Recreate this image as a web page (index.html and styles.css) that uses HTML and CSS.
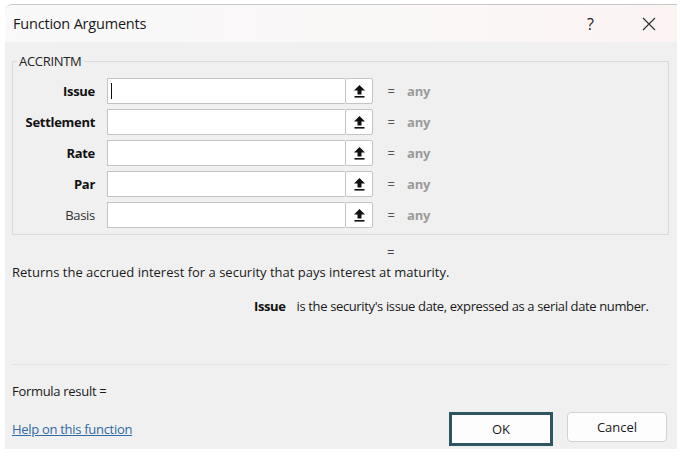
FILE: index.html
```html
<!DOCTYPE html>
<html>
<head>
<meta charset="utf-8">
<link rel="stylesheet" href="styles.css">
</head>
<body>
<div class="window">
  <div class="titlebar">
    <span class="title">Function Arguments</span>
    <span class="help">?</span>
    <svg class="close" width="14" height="14" viewBox="0 0 14 14"><path d="M1 1L13 13M13 1L1 13" stroke="#333" stroke-width="1.2" fill="none"/></svg>
  </div>
  <div class="content">
    <fieldset class="group">
      <legend>ACCRINTM</legend>
      <div class="args">
        <span class="lbl b">Issue</span>
        <div class="field"><span class="input"><span class="caret"></span></span><span class="pick"><svg width="11" height="13" viewBox="0 0 11 13"><path d="M5.5 0L11 5.5H7.5V9.5H3.5V5.5H0Z" fill="#111"/><rect x="0.5" y="11" width="10" height="1.6" fill="#111"/></svg></span></div>
        <span class="eq">=</span><span class="any">any</span>

        <span class="lbl b">Settlement</span>
        <div class="field"><span class="input"></span><span class="pick"><svg width="11" height="13" viewBox="0 0 11 13"><path d="M5.5 0L11 5.5H7.5V9.5H3.5V5.5H0Z" fill="#111"/><rect x="0.5" y="11" width="10" height="1.6" fill="#111"/></svg></span></div>
        <span class="eq">=</span><span class="any">any</span>

        <span class="lbl b">Rate</span>
        <div class="field"><span class="input"></span><span class="pick"><svg width="11" height="13" viewBox="0 0 11 13"><path d="M5.5 0L11 5.5H7.5V9.5H3.5V5.5H0Z" fill="#111"/><rect x="0.5" y="11" width="10" height="1.6" fill="#111"/></svg></span></div>
        <span class="eq">=</span><span class="any">any</span>

        <span class="lbl b">Par</span>
        <div class="field"><span class="input"></span><span class="pick"><svg width="11" height="13" viewBox="0 0 11 13"><path d="M5.5 0L11 5.5H7.5V9.5H3.5V5.5H0Z" fill="#111"/><rect x="0.5" y="11" width="10" height="1.6" fill="#111"/></svg></span></div>
        <span class="eq">=</span><span class="any">any</span>

        <span class="lbl">Basis</span>
        <div class="field"><span class="input"></span><span class="pick"><svg width="11" height="13" viewBox="0 0 11 13"><path d="M5.5 0L11 5.5H7.5V9.5H3.5V5.5H0Z" fill="#111"/><rect x="0.5" y="11" width="10" height="1.6" fill="#111"/></svg></span></div>
        <span class="eq">=</span><span class="any">any</span>
      </div>
    </fieldset>
    <div class="result-eq">=</div>
    <p class="desc">Returns the accrued interest for a security that pays interest at maturity.</p>
    <p class="argdesc"><b>Issue</b><span>is the security's issue date, expressed as a serial date number.</span></p>
    <div class="sep"></div>
    <p class="formula">Formula result =</p>
    <div class="footer">
      <a class="link" href="#">Help on this function</a>
      <div class="buttons">
        <span class="btn ok">OK</span>
        <span class="btn cancel">Cancel</span>
      </div>
    </div>
  </div>
</div>
</body>
</html>
```

FILE: styles.css
```css
* { box-sizing: border-box; }
html, body { margin: 0; padding: 0; background: #ffffff; }
body {
  font-family: "Open Sans", "Noto Sans", sans-serif;
  font-size: 13px;
  color: #1a1a1a;
}
.window {
  margin: 4px 3px 0 5px;
  height: 445px;
  border-top: 1px solid #c9c9c9;
  border-top-left-radius: 7px;
  overflow: hidden;
  background: #f0f0f0;
}
.titlebar {
  height: 37px;
  display: flex;
  align-items: center;
  background: linear-gradient(to right, #f9f9f9, #fbf7f7 70%, #fcf3f3);
  padding-left: 8px;
}
.title { font-size: 14.5px; color: #1a1a1a; flex: 1; letter-spacing: -0.2px; }
.help { font-size: 16px; color: #222; margin-right: 48px; }
.close { margin-right: 21px; }
.content { padding: 0 8px 0 7px; }
.group {
  margin: 10px 0 0 0;
  padding: 8px 0 6px 0;
  border: 1px solid #dadada;
  width: 657px;
  height: 183px;
}
.group legend {
  padding: 0 2px;
  margin-left: 4px;
  font-size: 13px;
  color: #222;
  letter-spacing: -0.3px;
}
.args {
  display: grid;
  grid-template-columns: 82px 278px 30px auto;
  row-gap: 5px;
  align-items: center;
}
.lbl { text-align: right; font-size: 13px; letter-spacing: -0.3px; color: #333; }
.lbl.b { font-weight: 700; color: #111; }
.field { display: flex; height: 26px; margin-left: 12px; width: 266px; }
.input {
  flex: 1;
  background: #fff;
  border: 1px solid #c4c4c4;
  border-right: none;
  position: relative;
}
.caret { position: absolute; left: 3px; top: 4px; width: 1px; height: 16px; background: #111; }
.pick {
  width: 28px;
  background: #fff;
  border: 1px solid #c4c4c4;
  border-radius: 2px;
  display: flex;
  align-items: center;
  justify-content: center;
}
.eq { text-align: right; color: #555; font-size: 13px; padding-right: 8px; }
.any { color: #9a9a9a; font-weight: 700; padding-left: 4px; font-size: 13px; letter-spacing: -0.2px; }
.result-eq { margin: 8px 0 0 375px; color: #444; height: 17px; }
.desc { margin: 3px 0 0 0; color: #1a1a1a; }
.argdesc { margin: 16px 0 0 242px; letter-spacing: -0.37px; }
.argdesc b { color: #111; margin-right: 11px; }
.sep { margin: 49px 0 0 0; height: 1px; background: #e2e2e2; width: 657px; }
.formula { margin: 17px 0 0 0; letter-spacing: -0.3px; }
.footer { display: flex; justify-content: space-between; align-items: center; margin-top: 12px; }
.link { color: #2f6aa5; text-decoration: underline; letter-spacing: -0.3px; }
.buttons { display: flex; gap: 14px; margin-right: 2px; }
.btn {
  display: flex;
  align-items: center;
  justify-content: center;
  background: #fdfdfd;
  color: #1a1a1a;
}
.ok { width: 104px; height: 34px; border: 3px solid #2e5560; }
.cancel { width: 100px; height: 30px; border: 1px solid #d2d2d2; border-radius: 4px; }
```
